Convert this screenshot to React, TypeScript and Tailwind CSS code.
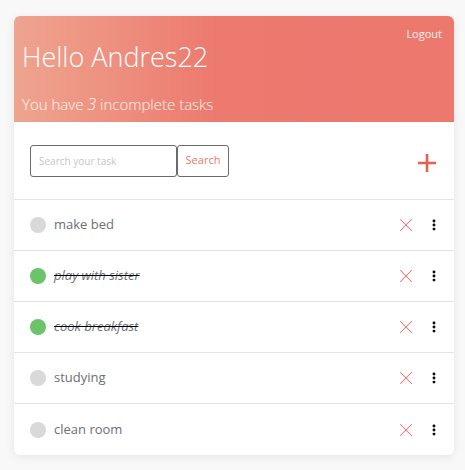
import { X, MoreVertical } from 'lucide-react';

const tasks = [
  { name: 'make bed', done: false },
  { name: 'play with sister', done: true },
  { name: 'cook breakfast', done: true },
  { name: 'studying', done: false },
  { name: 'clean room', done: false },
];

export default function App() {
  return (
    <div className="min-h-[470px] bg-[#f8f8f8] pt-4 px-[14px] font-['Open_Sans',sans-serif]">
      <div className="w-[440px] bg-white rounded-md overflow-hidden shadow-[0_2px_10px_rgba(0,0,0,0.08)]">
        {/* Header */}
        <div className="h-[106px] bg-gradient-to-r from-[#eea48f] via-[#ec7a6f] via-45% to-[#ec786e] px-2 pt-[10px] text-white">
          <div className="flex justify-end pr-[4px]">
            <button className="text-[11px] leading-4 text-white/90">Logout</button>
          </div>
          <h1 className="text-[27px] font-light leading-8 -mt-[1px]">Hello Andres22</h1>
          <p className="text-[15px] font-light mt-[19px] text-white/90">
            You have <span className="italic text-[16px]">3</span> incomplete tasks
          </p>
        </div>

        {/* Search */}
        <div className="h-[78px] flex items-center px-4 border-b border-[#dfe3ea]">
          <input
            className="w-[147px] h-[32px] border border-[#6b6b6b] rounded-[3px] px-2 text-[10px] placeholder:text-[#c7c7c7] outline-none"
            placeholder="Search your task"
          />
          <button className="w-[52px] h-[32px] border border-[#6b6b6b] rounded-[3px] text-[11px] text-[#ec7a6a]">
            Search
          </button>
          <button className="ml-auto mr-[2px] mt-[4px] text-[#e4614f]">
            <svg width="18" height="18" viewBox="0 0 18 18">
              <path d="M9 0v18M0 9h18" stroke="currentColor" strokeWidth="2.6" />
            </svg>
          </button>
        </div>

        {/* Tasks */}
        {tasks.map((t, i) => (
          <div
            key={i}
            className={`h-[51px] flex items-center pl-4 pr-[13px] ${i < tasks.length - 1 ? 'border-b border-[#dfe3ea]' : ''}`}
          >
            <span className={`w-4 h-4 rounded-full ${t.done ? 'bg-[#6cc36a]' : 'bg-[#d9d9d9]'}`} />
            <span
              className={`ml-2 text-[13px] text-[#6b6f75] ${t.done ? 'italic line-through decoration-black' : ''}`}
            >
              {t.name}
            </span>
            <X className="ml-auto w-[22px] h-[22px] text-[#e8707a]" strokeWidth={1.1} />
            <MoreVertical className="ml-[10px] w-[14px] h-[14px] text-black" strokeWidth={3} />
          </div>
        ))}
      </div>
    </div>
  );
}
